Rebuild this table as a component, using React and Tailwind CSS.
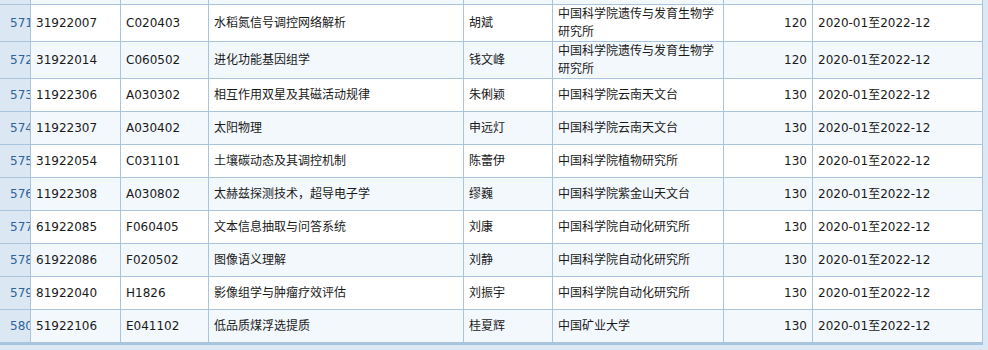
import { Fragment } from "react";

const rows = [
  ["571", "31922007", "C020403", "水稻氮信号调控网络解析", "胡斌", "中国科学院遗传与发育生物学研究所", "120"],
  ["572", "31922014", "C060502", "进化功能基因组学", "钱文峰", "中国科学院遗传与发育生物学研究所", "120"],
  ["573", "11922306", "A030302", "相互作用双星及其磁活动规律", "朱俐颖", "中国科学院云南天文台", "130"],
  ["574", "11922307", "A030402", "太阳物理", "申远灯", "中国科学院云南天文台", "130"],
  ["575", "31922054", "C031101", "土壤碳动态及其调控机制", "陈蕾伊", "中国科学院植物研究所", "130"],
  ["576", "11922308", "A030802", "太赫兹探测技术，超导电子学", "缪巍", "中国科学院紫金山天文台", "130"],
  ["577", "61922085", "F060405", "文本信息抽取与问答系统", "刘康", "中国科学院自动化研究所", "130"],
  ["578", "61922086", "F020502", "图像语义理解", "刘静", "中国科学院自动化研究所", "130"],
  ["579", "81922040", "H1826", "影像组学与肿瘤疗效评估", "刘振宇", "中国科学院自动化研究所", "130"],
  ["580", "51922106", "E041102", "低品质煤浮选提质", "桂夏辉", "中国矿业大学", "130"],
];

const PERIOD = "2020-01至2022-12";

// column widths include the 1px right border of each cell
const cols = "grid grid-cols-[31px_90px_88px_255px_89px_171px_89px_170px]";
const cell = "flex items-center border-r border-[#a9c5de] px-[5px]";

export default function App() {
  return (
    <div className="w-[988px] h-[350px] overflow-hidden bg-[#dce9f4] font-['DejaVu_Sans','Noto_Sans_CJK_SC',sans-serif] text-[12px] leading-[18px] text-[#1a1a1a]">
      <div className="w-[983px] bg-white">
        {/* tail of the row above, cut off by the viewport */}
        <div className={`${cols} h-[5px] border-b border-[#a9c5de] bg-[#f3f8fd]`}>
          <div className="border-r border-[#a9c5de] bg-[#dbe8f4]" />
          {[0, 1, 2, 3, 4, 5, 6].map((i) => (
            <div key={i} className="border-r border-[#a9c5de]" />
          ))}
        </div>

        {rows.map((r, idx) => {
          const tall = r[5].length > 13;
          return (
            <div
              key={r[0]}
              className={`${cols} ${tall ? "h-[37px]" : "h-[33px]"} border-b border-[#a9c5de] ${
                idx % 2 === 1 ? "bg-[#f3f8fd]" : "bg-white"
              }`}
            >
              <div className="flex items-center overflow-hidden whitespace-nowrap border-r border-[#a9c5de] bg-[#dbe8f4] pl-[10px] text-[#2f6299]">
                {r[0]}
              </div>
              <div className={cell}>{r[1]}</div>
              <div className={cell}>{r[2]}</div>
              <div className={cell}>{r[3]}</div>
              <div className={cell}>{r[4]}</div>
              <div className={cell}>
                <span>{r[5]}</span>
              </div>
              <div className={`${cell} justify-end`}>{r[6]}</div>
              <div className={`${cell} whitespace-nowrap`}>
                <Fragment>{PERIOD}</Fragment>
              </div>
            </div>
          );
        })}
      </div>
      <div className="h-[2px] w-[983px] bg-[#a9c5de]" />
    </div>
  );
}
